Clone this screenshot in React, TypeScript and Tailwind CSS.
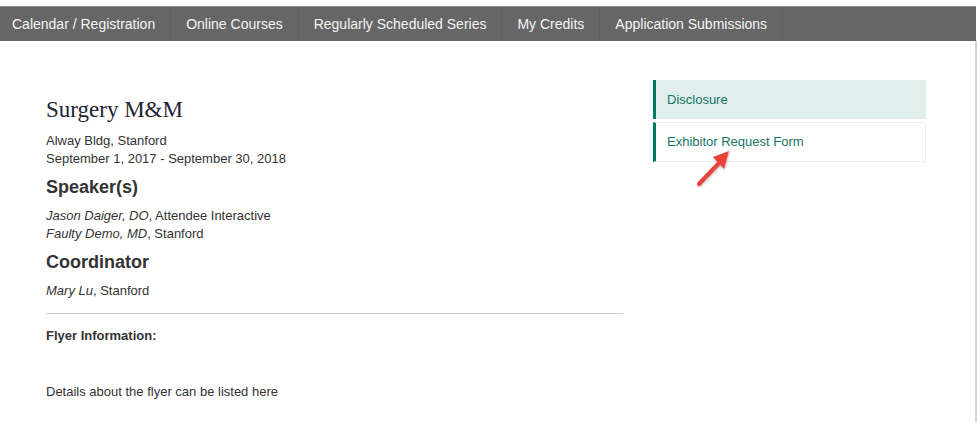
import React from 'react';

const navItems = [
    'Calendar / Registration',
    'Online Courses',
    'Regularly Scheduled Series',
    'My Credits',
    'Application Submissions',
];

function RedArrow() {
    return (
        <svg
            className="absolute left-[690px] top-[144px]"
            width="48"
            height="48"
            viewBox="0 0 48 48"
        >
            <defs>
                <filter id="sh" x="-20%" y="-20%" width="140%" height="140%">
                    <feDropShadow dx="0.5" dy="1" stdDeviation="0.8" floodColor="#000" floodOpacity="0.3" />
                </filter>
            </defs>
            <g filter="url(#sh)">
                <line x1="9" y1="40" x2="31" y2="17" stroke="#e8433a" strokeWidth="4" strokeLinecap="round" />
                <polygon points="39,7 23,13 34,25" fill="#e8433a" />
            </g>
        </svg>
    );
}

export default function App() {
    return (
        <div className="relative w-[978px] h-[422px] bg-white overflow-hidden font-['Liberation_Sans',Arial,sans-serif] text-[#333]">
            {/* Top nav */}
            <div className="pt-[6px]">
                <nav className="flex w-[976px] h-[35px] bg-[#666] border-t border-[#8c8c8c]">
                    {navItems.map((item) => (
                        <div
                            key={item}
                            className="flex items-center px-[15px] first:pl-[12px] border-r border-[#5a5f68] text-[14px] text-[#f4f4f4]"
                        >
                            {item}
                        </div>
                    ))}
                </nav>
            </div>

            {/* Body */}
            <div className="flex w-[977px] h-[381px] border-r-2 border-[#d4d4d4]">
                {/* Main column */}
                <div className="w-[577px] ml-[46px] pt-[56px]">
                    <h1 className="font-['Liberation_Serif','Times_New_Roman',serif] text-[23px] leading-[26px] text-[#1e2230]">
                        Surgery M&amp;M
                    </h1>
                    <div className="mt-[9px] text-[13px] leading-[18px]">
                        <p>Alway Bldg, Stanford</p>
                        <p>September 1, 2017 - September 30, 2018</p>
                    </div>

                    <h2 className="mt-[8px] text-[18px] leading-[22px] font-bold">Speaker(s)</h2>
                    <div className="mt-[9px] text-[13px] leading-[18px]">
                        <p><i>Jason Daiger, DO</i>, Attendee Interactive</p>
                        <p><i>Faulty Demo, MD</i>, Stanford</p>
                    </div>

                    <h2 className="mt-[8px] text-[18px] leading-[22px] font-bold">Coordinator</h2>
                    <div className="mt-[9px] text-[13px] leading-[18px]">
                        <p><i>Mary Lu</i>, Stanford</p>
                    </div>

                    <hr className="mt-[13px] border-0 border-t border-[#cccccc]" />

                    <p className="mt-[14px] text-[13px] leading-[16px] font-bold">Flyer Information:</p>
                    <p className="mt-[40px] text-[13px] leading-[16px]">Details about the flyer can be listed here</p>
                </div>

                {/* Side links */}
                <div className="w-[273px] ml-[30px] pt-[39px] flex flex-col gap-[3px]">
                    <a className="flex items-center h-[39px] pl-[11px] bg-[#e0efeb] border-l-[3px] border-[#00775e] text-[13px] text-[#137566]">
                        Disclosure
                    </a>
                    <a className="flex items-center h-[40px] pl-[11px] bg-white border border-[#efefef] border-l-[3px] border-l-[#00775e] text-[13px] text-[#137566]">
                        Exhibitor Request Form
                    </a>
                </div>
            </div>

            <RedArrow />
        </div>
    );
}
